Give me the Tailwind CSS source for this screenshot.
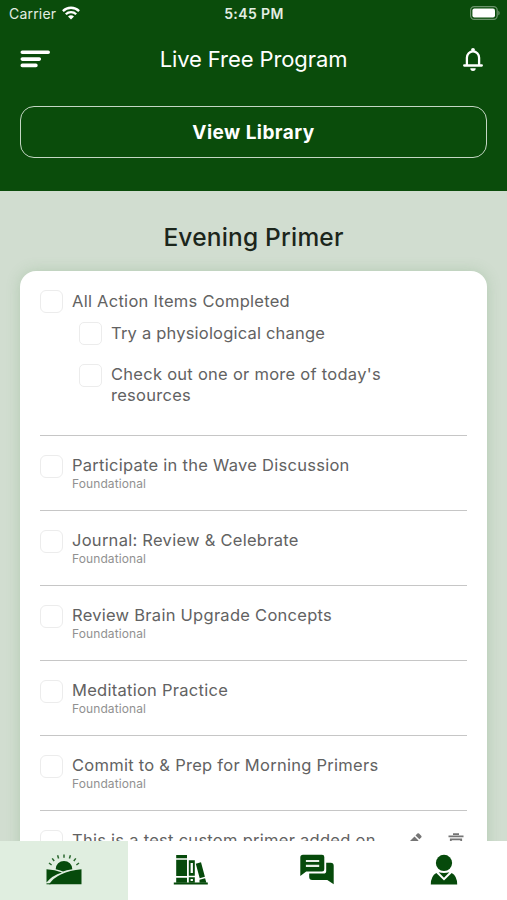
<!DOCTYPE html>
<html lang="en">
  <head>
    <meta charset="UTF-8" />
    <meta name="viewport" content="width=device-width, initial-scale=1.0" />
    <title>Live Free Program</title>
    <script src="https://cdn.jsdelivr.net/npm/@tailwindcss/browser@4"></script>
  </head>
  <body>
    <div class="flex flex-col h-[900px] w-[507px] overflow-hidden bg-[#d1ddd0] font-['Inter',sans-serif]">
      <header class="shrink-0 h-[190.5px] bg-[#0a4c0b] text-white">
        <!-- Status bar -->
        <div class="grid grid-cols-3 items-center h-7 pl-[9px] pr-[7px] text-[#e3eee3]">
          <div class="flex items-center gap-[6px]">
            <span class="text-[14px] leading-5 tracking-[0.2px]">Carrier</span>
            <svg class="w-[18px] h-[14px] -mt-[2px]" viewBox="0 0 18 14" fill="none" stroke="#fff" stroke-width="2.3">
              <path d="M.9 5.1a11.5 11.5 0 0 1 16.2 0" />
              <path d="M3.8 8.2a7.4 7.4 0 0 1 10.4 0" />
              <path d="M9 13.6 6 10.6a4.3 4.3 0 0 1 6 0z" fill="#fff" stroke="none" />
            </svg>
          </div>
          <span class="text-center text-[14px] leading-5 font-semibold tracking-[0.4px] -ml-[1px]">5:45 PM</span>
          <svg class="justify-self-end w-[30px] h-[14px] -mt-[2px]" viewBox="0 0 30 14">
            <rect x=".6" y=".6" width="26.6" height="12.8" rx="3.6" fill="none" stroke="#6c946c" stroke-width="1.2" />
            <rect x="2.4" y="2.4" width="22.6" height="9.2" rx="2" fill="#fff" />
            <path d="M28.3 4.7c1.8.7 1.8 3.9 0 4.6z" fill="#6c946c" />
          </svg>
        </div>
        <!-- Title bar -->
        <div class="flex items-center justify-between h-[62px] pl-5 pr-[24px]">
          <svg class="w-[30px] h-[18px]" viewBox="0 0 30 18" stroke="#fff" stroke-width="3.6" stroke-linecap="round">
            <path d="M2.3 2.3h25.9M2.3 9.1h17M2.3 15.4h13.6" />
          </svg>
          <h1 class="text-[22px] tracking-[-0.1px] -ml-[6px]">Live Free Program</h1>
          <svg class="w-[20px] h-[25px]" viewBox="0 0 20 25">
            <path d="M3.9 18.6v-7.8a6.1 6.4 0 0 1 12.2 0v7.8" fill="none" stroke="#fff" stroke-width="2.3" />
            <path d="M1.2 18.5h17.6" stroke="#fff" stroke-width="2.3" stroke-linecap="round" />
            <circle cx="10" cy="2.8" r="1.9" fill="#fff" />
            <path d="M7.3 21.2h5.4a2.7 2.7 0 0 1-5.4 0z" fill="#fff" />
          </svg>
        </div>
        <button class="block w-[467px] h-[52px] mx-auto mt-4 rounded-[14px] border-[1.5px] border-[#c4d6c4] pt-[2px] text-[19px] font-bold tracking-[0.45px]">
          View Library
        </button>
      </header>

      <main class="flex-1 min-h-0 overflow-hidden px-5">
        <h2 class="h-[80.5px] pt-[29px] text-center text-[24.5px] leading-[34px] font-medium tracking-[0.2px] text-[#1c261c]">Evening Primer</h2>
        <section class="h-[640px] px-5 rounded-t-[16px] bg-white text-[#626262] text-[16.5px] leading-[21px] tracking-[0.27px] shadow-[0_0_14px_rgba(90,150,90,0.25)]">
          <div class="h-[165px] pt-[19px] border-b-[1.5px] border-[#c6c6c6]">
            <div class="flex gap-[9px]">
              <span class="w-[23px] h-[23px] shrink-0 rounded-[6px] border-[1.5px] border-[#ececec]"></span>
              <p class="pt-[1px]">All Action Items Completed</p>
            </div>
            <div class="flex gap-[9px] mt-[9px] ml-[39px]">
              <span class="w-[23px] h-[23px] shrink-0 rounded-[5px] border-[1.5px] border-[#ececec]"></span>
              <p class="pt-[1px] tracking-[0.2px]">Try a physiological change</p>
            </div>
            <div class="flex gap-[9px] mt-[19px] ml-[39px]">
              <span class="w-[23px] h-[23px] shrink-0 rounded-[5px] border-[1.5px] border-[#ececec]"></span>
              <p>Check out one or more of today's<br />resources</p>
            </div>
          </div>
          <div class="flex gap-[9px] h-[75px] pt-[19px] border-b-[1.5px] border-[#c6c6c6]">
            <span class="w-[23px] h-[23px] shrink-0 rounded-[6px] border-[1.5px] border-[#ececec]"></span>
            <div>
              <p>Participate in the Wave Discussion</p>
              <p class="text-[12px] leading-4 tracking-[0.1px] text-[#919191]">Foundational</p>
            </div>
          </div>
          <div class="flex gap-[9px] h-[75px] pt-[19px] border-b-[1.5px] border-[#c6c6c6]">
            <span class="w-[23px] h-[23px] shrink-0 rounded-[6px] border-[1.5px] border-[#ececec]"></span>
            <div>
              <p>Journal: Review &amp; Celebrate</p>
              <p class="text-[12px] leading-4 tracking-[0.1px] text-[#919191]">Foundational</p>
            </div>
          </div>
          <div class="flex gap-[9px] h-[75px] pt-[19px] border-b-[1.5px] border-[#c6c6c6]">
            <span class="w-[23px] h-[23px] shrink-0 rounded-[6px] border-[1.5px] border-[#ececec]"></span>
            <div>
              <p>Review Brain Upgrade Concepts</p>
              <p class="text-[12px] leading-4 tracking-[0.1px] text-[#919191]">Foundational</p>
            </div>
          </div>
          <div class="flex gap-[9px] h-[75px] pt-[19px] border-b-[1.5px] border-[#c6c6c6]">
            <span class="w-[23px] h-[23px] shrink-0 rounded-[6px] border-[1.5px] border-[#ececec]"></span>
            <div>
              <p>Meditation Practice</p>
              <p class="text-[12px] leading-4 tracking-[0.1px] text-[#919191]">Foundational</p>
            </div>
          </div>
          <div class="flex gap-[9px] h-[75px] pt-[19px] border-b-[1.5px] border-[#c6c6c6]">
            <span class="w-[23px] h-[23px] shrink-0 rounded-[6px] border-[1.5px] border-[#ececec]"></span>
            <div>
              <p>Commit to &amp; Prep for Morning Primers</p>
              <p class="text-[12px] leading-4 tracking-[0.1px] text-[#919191]">Foundational</p>
            </div>
          </div>
          <div class="flex gap-[9px] pt-[19px]">
            <span class="w-[23px] h-[23px] shrink-0 rounded-[6px] border-[1.5px] border-[#ececec]"></span>
            <p class="flex-1 whitespace-nowrap">This is a test custom primer added on</p>
            <svg class="w-[14px] h-[16px] mt-[3px] mr-[17px]" viewBox="0 0 14 16" fill="#757575">
              <path d="M0 10 6.500 3.500l4 4-7 7H0z" />
              <path d="m7.500 2.500 1.900-1.900q.8-.8 1.600 0l2.200 2.200q.8.8 0 1.600l-1.800 1.900z" />
            </svg>
            <svg class="w-[16px] h-[17px] mt-[3px] mr-[3px]" viewBox="0 0 16 17" fill="none" stroke="#757575" stroke-width="1.8">
              <path d="M.5 3.3h15M5 1.2h6M2.8 6.4h10.4v9H2.8z" />
            </svg>
          </div>
        </section>
      </main>

      <!-- Bottom navigation -->
      <nav class="relative shrink-0 grid grid-cols-[127.5px_126px_127px_126.5px] h-[59px] bg-white">
        <a class="flex justify-center pt-[13px] bg-[#e0eee0]">
          <svg class="w-[36px] h-[31px]" viewBox="0 0 36 31">
            <path d="M9.700 15.200a8.300 8.300 0 0 1 16.600 0Q20 16 17 17.600 14 16 9.700 15.200z" fill="#064a0b" />
            <path d="M3 9l2.600 2M6.200 4.400l2 2.600M11.600 1.300l1 3.100M18 .5v3.200M24.400 1.300l-1 3.100M29.800 4.400l-2 2.600M33 9l-2.600 2" stroke="#2b682f" stroke-width="1.5" />
            <path d="M.5 15.200q8.500.3 15.500 3.300Q6 21.500.5 28.500z" fill="#064a0b" />
            <path d="M3 30.300Q11.500 17.500 35.500 15.200v15.100z" fill="#064a0b" />
            <path d="M.5 29.800h4" stroke="#064a0b" />
          </svg>
        </a>
        <a class="flex justify-center pt-[13px]">
          <svg class="w-[36px] h-[31px]" viewBox="0 0 36 31" fill="#064a0b">
            <path d="M3.200 1h10.800v3.200H3.200zM3.200 5.700h10.800v16.300H3.200zM3.200 23.700h10.800v5H3.200z" />
            <path fill-rule="evenodd" d="M15.800 6.300h6v15.500h-6zM17.600 8.900v10.200h2.300V8.900z" />
            <path fill-rule="evenodd" d="M15.800 23.200h6v5.500h-6zM17.600 25v2h2.300v-2z" />
            <path d="m22.800 9.700 5.200-1.400 3.900 14.500-5.200 1.400zM26.500 25.700l5.600-1.400 1.300 4.500h-6.900z" />
            <path d="M.8 28.500h34v2H.8z" />
          </svg>
        </a>
        <a class="flex justify-center pt-[13px]">
          <svg class="w-[36px] h-[31px]" viewBox="0 0 36 31" fill="#064a0b">
            <path d="M4 .8h19a2.300 2.300 0 0 1 2.300 2.300v12.200a2.300 2.300 0 0 1-2.300 2.300H7.200L1.300 22V3.500A2.700 2.700 0 0 1 4 .8z" />
            <path d="M6.900 7h13.300M6.900 11.900h13.300" stroke="#e8f0e8" stroke-width="2.100" />
            <path d="M27.200 8.700h4.500a3 3 0 0 1 3 3V30.300l-6.400-4.300H13.200a3 3 0 0 1-3-3v-3.400h14.300a2.700 2.700 0 0 0 2.700-2.700z" />
          </svg>
        </a>
        <a class="flex justify-center pt-[13px]">
          <svg class="w-[28px] h-[31px]" viewBox="0 0 28 31" fill="#064a0b">
            <circle cx="14" cy="8.900" r="8.100" />
            <path d="M6.300 19 14 26.500l7.700-7.500q5.500 3 5.500 11.500H.8q0-8.500 5.500-11.500z" />
            <path d="M8.600 18.300q5.400 1.200 10.800 0L14 23.800z" />
          </svg>
        </a>
      </nav>
    </div>
  </body>
</html>
